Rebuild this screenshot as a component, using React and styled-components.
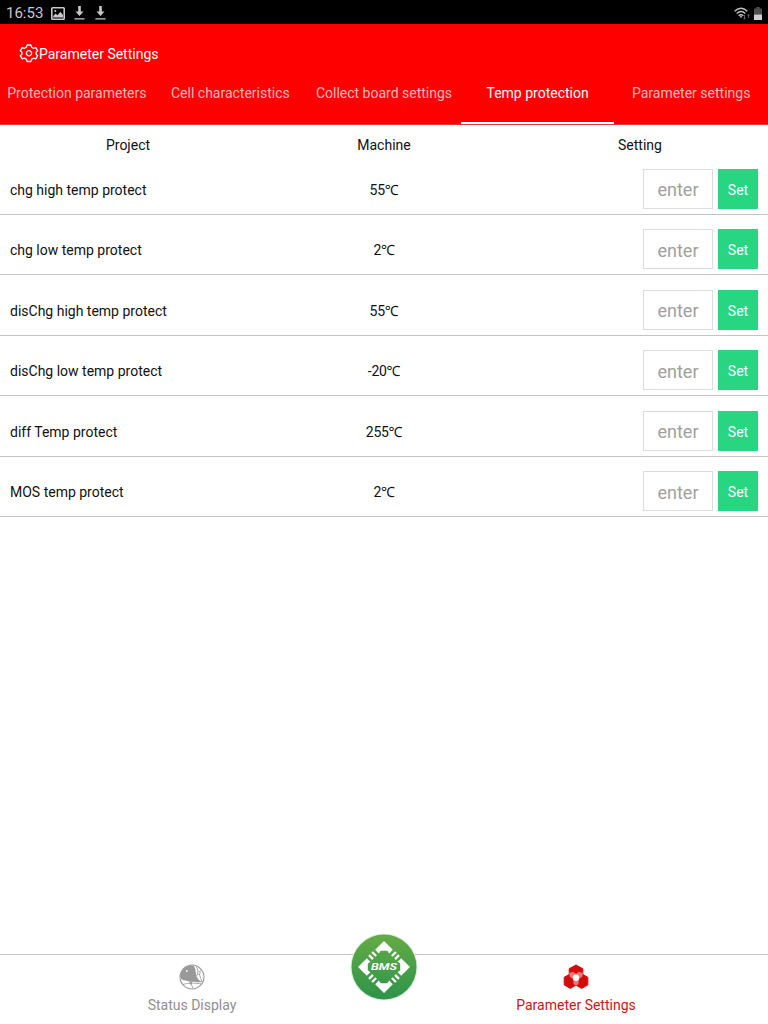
import styled, { createGlobalStyle } from 'styled-components';

const TABS = [
    'Protection parameters',
    'Cell characteristics',
    'Collect board settings',
    'Temp protection',
    'Parameter settings',
];

const ROWS = [
    { name: 'chg high temp protect', value: '55' },
    { name: 'chg low temp protect', value: '2' },
    { name: 'disChg high temp protect', value: '55' },
    { name: 'disChg low temp protect', value: '-20' },
    { name: 'diff Temp protect', value: '255' },
    { name: 'MOS temp protect', value: '2' },
];

function App() {
    return (
        <>
            <GlobalStyle />
            <Screen>
                <StatusBar>
                    <StatusGroup>
                        <Clock>16:53</Clock>
                        <PictureIcon />
                        <DownloadIcon />
                        <DownloadIcon />
                    </StatusGroup>
                    <StatusSide>
                        <WifiIcon />
                        <BatteryIcon />
                    </StatusSide>
                </StatusBar>
                <Header>
                    <TitleRow>
                        <GearIcon />
                        <Title>Parameter Settings</Title>
                    </TitleRow>
                    <TabList>
                        {TABS.map((tab, i) => (
                            <Tab key={tab} type='button' $active={i === 3}>{tab}</Tab>
                        ))}
                    </TabList>
                </Header>
                <Content>
                    <TableHead>
                        <HeadCell>Project</HeadCell>
                        <HeadCell>Machine</HeadCell>
                        <HeadCell>Setting</HeadCell>
                    </TableHead>
                    {ROWS.map((row) => (
                        <Row key={row.name}>
                            <Name>{row.name}</Name>
                            <Value>{row.value}℃</Value>
                            <Setting>
                                <EnterInput type='text' placeholder='enter' />
                                <SetBtn type='button'>Set</SetBtn>
                            </Setting>
                        </Row>
                    ))}
                </Content>
                <BottomBar>
                    <NavItem>
                        <GlobeIcon />
                        <NavText>Status Display</NavText>
                    </NavItem>
                    <NavItem $active>
                        <HexIcon />
                        <NavText>Parameter Settings</NavText>
                    </NavItem>
                    <BmsWrap>
                        <BmsLogo />
                    </BmsWrap>
                </BottomBar>
            </Screen>
        </>
    )
}

function PictureIcon() {
    return (
        <svg width='14' height='13' viewBox='0 0 14 13'>
            <rect x='0.8' y='0.8' width='12.4' height='11.4' rx='0.8' fill='none' stroke='#c8c8c8' strokeWidth='1.6' />
            <path d='M2.2 10.6V9l2.4-2.6 1.8 1.8 3-3.4L12 8v2.6z' fill='#c8c8c8' />
            <circle cx='4.3' cy='4' r='1' fill='#c8c8c8' />
        </svg>
    )
}

function DownloadIcon() {
    return (
        <svg width='11' height='14' viewBox='0 0 11 14'>
            <path d='M4.2 0h2.6v5.6h2.7L5.5 10 1.5 5.6h2.7zM0.4 12.2h10.2v1.3H0.4z' fill='#c8c8c8' />
        </svg>
    )
}

function WifiIcon() {
    return (
        <svg width='17' height='13' viewBox='0 0 17 13'>
            <g fill='none' stroke='#bdbdbd' strokeWidth='1.4'>
                <path d='M0.6 4.2Q7 -1.8 13.4 4.2' />
                <path d='M2.6 6.5Q7 2.6 11.4 6.5' />
                <path d='M4.6 8.7Q7 6.6 9.4 8.7' />
            </g>
            <path d='M5.6 9.5Q7 8.5 8.4 9.5L7 11z' fill='#bdbdbd' />
            <path d='M10 8v3H9l1.5 1.6L12 11h-1V8zM14 11V8.6h-1L14.5 7 16 8.6h-1V11z' fill='#626262' />
        </svg>
    )
}

function BatteryIcon() {
    return (
        <svg width='8' height='13' viewBox='0 0 8 13'>
            <path d='M2.3 0h3.4v1.4H8V13H0V1.4h2.3z' fill='#4e4e4e' />
            <path d='M0 7.6h8V13H0z' fill='#d0d0d0' />
        </svg>
    )
}

function GearIcon() {
    return (
        <svg width='20' height='20' viewBox='-10.7 -9.9 21.4 21.4' fill='none' stroke='#fff' strokeWidth='1.4' strokeLinejoin='round'>
            <path d='M-2-8.8h4l.7 2.3 2.1 1.2 2.5-.7 2 3.4L7.6-1.1v2.2l1.7 1.5-2 3.4-2.5-.7-2.1 1.2L2 8.800h-4l-.7-2.300-2.100-1.200-2.500.7-2-3.400 1.700-1.500v-2.200l-1.700-1.500 2-3.400 2.500.7 2.100-1.200z' />
            <circle r='2.8' />
        </svg>
    )
}

function GlobeIcon() {
    return (
        <svg width='26' height='26' viewBox='0 0 26 26'>
            <circle cx='13' cy='13' r='12' fill='#fff' stroke='#999' strokeWidth='1.1' />
            <path d='M2 8.2C4.5 3.2 9.5.8 14.5 1.5c1.8 2.4 2.2 5 2.2 7.3.6 5.7 4.1 8.3 7 9.3-5.2.5-8.7-.7-12.5-.4L2.5 15.5C1.3 13 1 11 2 8.2z' fill='#999' />
            <g fill='none' stroke='#999' strokeWidth='0.8'>
                <path d='M17 1.6l2.2 6.1M20.4 10.2l2.6 8M22.7 5.5l-2.3 2.6M16.9 12l2.4-2.1M3.5 20.4l8.3-1.5 11.2 1M12 19.2l2 5.4' />
                <circle cx='19.8' cy='8.9' r='1.4' fill='#fff' />
            </g>
            <circle cx='7.8' cy='7' r='0.9' fill='#fff' />
            <circle cx='11.8' cy='19.1' r='1.3' fill='#999' />
        </svg>
    )
}

function HexIcon() {
    return (
        <svg width='26' height='26' viewBox='0 0 26 26'>
            <g fill='#d40b0b' stroke='#d40b0b' strokeWidth='1' strokeLinejoin='round'>
                <path d='M13 1l6.8 3.7v7.8L13 16l-6.8-3.5V4.7z' />
                <path d='M7.4 9.8l6 3.5v7.6l-6 3.5-6.2-3.5v-7.6z' />
                <path d='M18.6 9.8l6.2 3.5v7.6l-6.2 3.5-6-3.5v-7.6z' />
            </g>
            <path d='M6 9l4-1.3 3 2.4 3-2.4L20 9l-.8 3.8-3.4 2.2-.4 5.3L13 21.6l-2.4-1.3-.4-5.3-3.4-2.2z' fill='#f47476' />
            <circle cx='13' cy='13.7' r='3.2' fill='#fff' />
        </svg>
    )
}

function BmsLogo() {
    return (
        <svg width='68' height='68' viewBox='-34 -34 68 68'>
            <defs>
                <linearGradient id='bms' x1='0' y1='0' x2='0' y2='1'>
                    <stop offset='0' stopColor='#65ab45' />
                    <stop offset='1' stopColor='#2c944a' />
                </linearGradient>
            </defs>
            <circle r='33.5' fill='#dceedd' />
            <circle r='32.5' fill='url(#bms)' />
            {[0, 90, 180, 270].map((angle) => (
                <g key={angle} transform={`rotate(${angle})`} fill='#fff'>
                    <path d='M0-26l8.8 8.8-3.6 3.6-1.9-2.6h-6.6l-1.9 2.6-3.6-3.6z' />
                    <g stroke='#fff' strokeWidth='2.3'>
                        <path d='M11.9-15L7.9-11M15-11.9l-4 4' />
                    </g>
                </g>
            ))}
            <BmsText x='0' y='3.3' textAnchor='middle' textLength='26' lengthAdjust='spacingAndGlyphs'>BMS</BmsText>
        </svg>
    )
}

const GlobalStyle = createGlobalStyle`
    * {
        box-sizing: border-box;
    }
    body {
        margin: 0;
        background: #fff;
        color: #111;
        font-family: Roboto, 'Noto Sans CJK SC', sans-serif;
        font-size: 14px;
    }
    button,
    input {
        margin: 0;
        padding: 0;
        border: 0;
        font-family: inherit;
    }
    svg {
        display: block;
        flex-shrink: 0;
    }
`
const Screen = styled.div`
    display: flex;
    flex-direction: column;
    height: 1024px;
    overflow: hidden;
`
const StatusBar = styled.div`
    display: flex;
    justify-content: space-between;
    align-items: center;
    height: 24px;
    padding: 2px 6px 0;
    background: #000;
`
const StatusGroup = styled.div`
    display: flex;
    align-items: center;
    gap: 10px;
`
const StatusSide = styled(StatusGroup)`
    gap: 3px;
`
const Clock = styled.span`
    width: 35px;
    font-size: 15px;
    line-height: 22px;
    color: #c8c8c8;

    & + svg {
        margin-right: -1px;
    }
`
const Header = styled.header`
    height: 101px;
    background: #ff0000;
    border-bottom: 1px solid #d83c3c;
`
const TitleRow = styled.div`
    display: flex;
    align-items: center;
    height: 39px;
    padding: 20px 0 0 19px;
`
const Title = styled.h1`
    margin: 0;
    padding-top: 1px;
    font-size: 14px;
    font-weight: 400;
    line-height: 20px;
    color: #fff;
`
const TabList = styled.nav`
    display: flex;
    height: 61px;
`
const Tab = styled.button`
    flex: 1;
    background: none;
    border-bottom: 2px solid ${(props) => (props.$active ? '#fff' : 'transparent')};
    color: ${(props) => (props.$active ? '#fff' : '#ffb8b8')};
    font-size: 14px;
    white-space: nowrap;
`
const Content = styled.main`
    flex: 1;
`
const TableHead = styled.div`
    display: flex;
    height: 29px;
    padding-top: 10px;
`
const HeadCell = styled.div`
    flex: 1;
    line-height: 20px;
    text-align: center;
`
const Row = styled.div`
    display: grid;
    grid-template-columns: repeat(3, 1fr);
    align-items: center;
    height: 60.5px;
    padding-top: 14.75px;
    padding-bottom: 4.75px;
    border-bottom: 1px solid #c4c4c4;
`
const Name = styled.span`
    padding: 1.5px 0 0 10px;
    line-height: 20px;
`
const Value = styled.span`
    padding-top: 1.5px;
    font-family: Roboto, 'Noto Sans', sans-serif;
    letter-spacing: -0.3px;
    line-height: 20px;
    text-align: center;
`
const Setting = styled.div`
    display: flex;
    justify-content: flex-end;
    gap: 5px;
    padding-right: 10px;
`
const EnterInput = styled.input`
    width: 70px;
    height: 40px;
    padding-top: 2px;
    border: 1px solid #dcdcdc;
    font-size: 18px;
    text-align: center;

    &::placeholder {
        color: #a0a0a0;
        opacity: 1;
    }
`
const SetBtn = styled.button`
    width: 40px;
    height: 40px;
    padding-top: 2px;
    background: #28d681;
    color: #fff;
    font-size: 14px;
`
const BottomBar = styled.footer`
    display: flex;
    position: relative;
    height: 70px;
    border-top: 1px solid #c4c4c4;
`
const NavItem = styled.div`
    display: flex;
    flex: 1;
    flex-direction: column;
    align-items: center;
    padding-top: 9px;
    color: ${(props) => (props.$active ? '#cf1420' : '#8f8f8f')};
`
const NavText = styled.span`
    margin-top: 5px;
    line-height: 20px;
`
// sits over the top edge of the bar
const BmsWrap = styled.div`
    position: absolute;
    top: -22.5px;
    left: 50%;
    transform: translateX(-50%);
`
const BmsText = styled.text`
    fill: #fff;
    font-size: 9.4px;
    font-style: italic;
    font-weight: 700;
`

export default App;
